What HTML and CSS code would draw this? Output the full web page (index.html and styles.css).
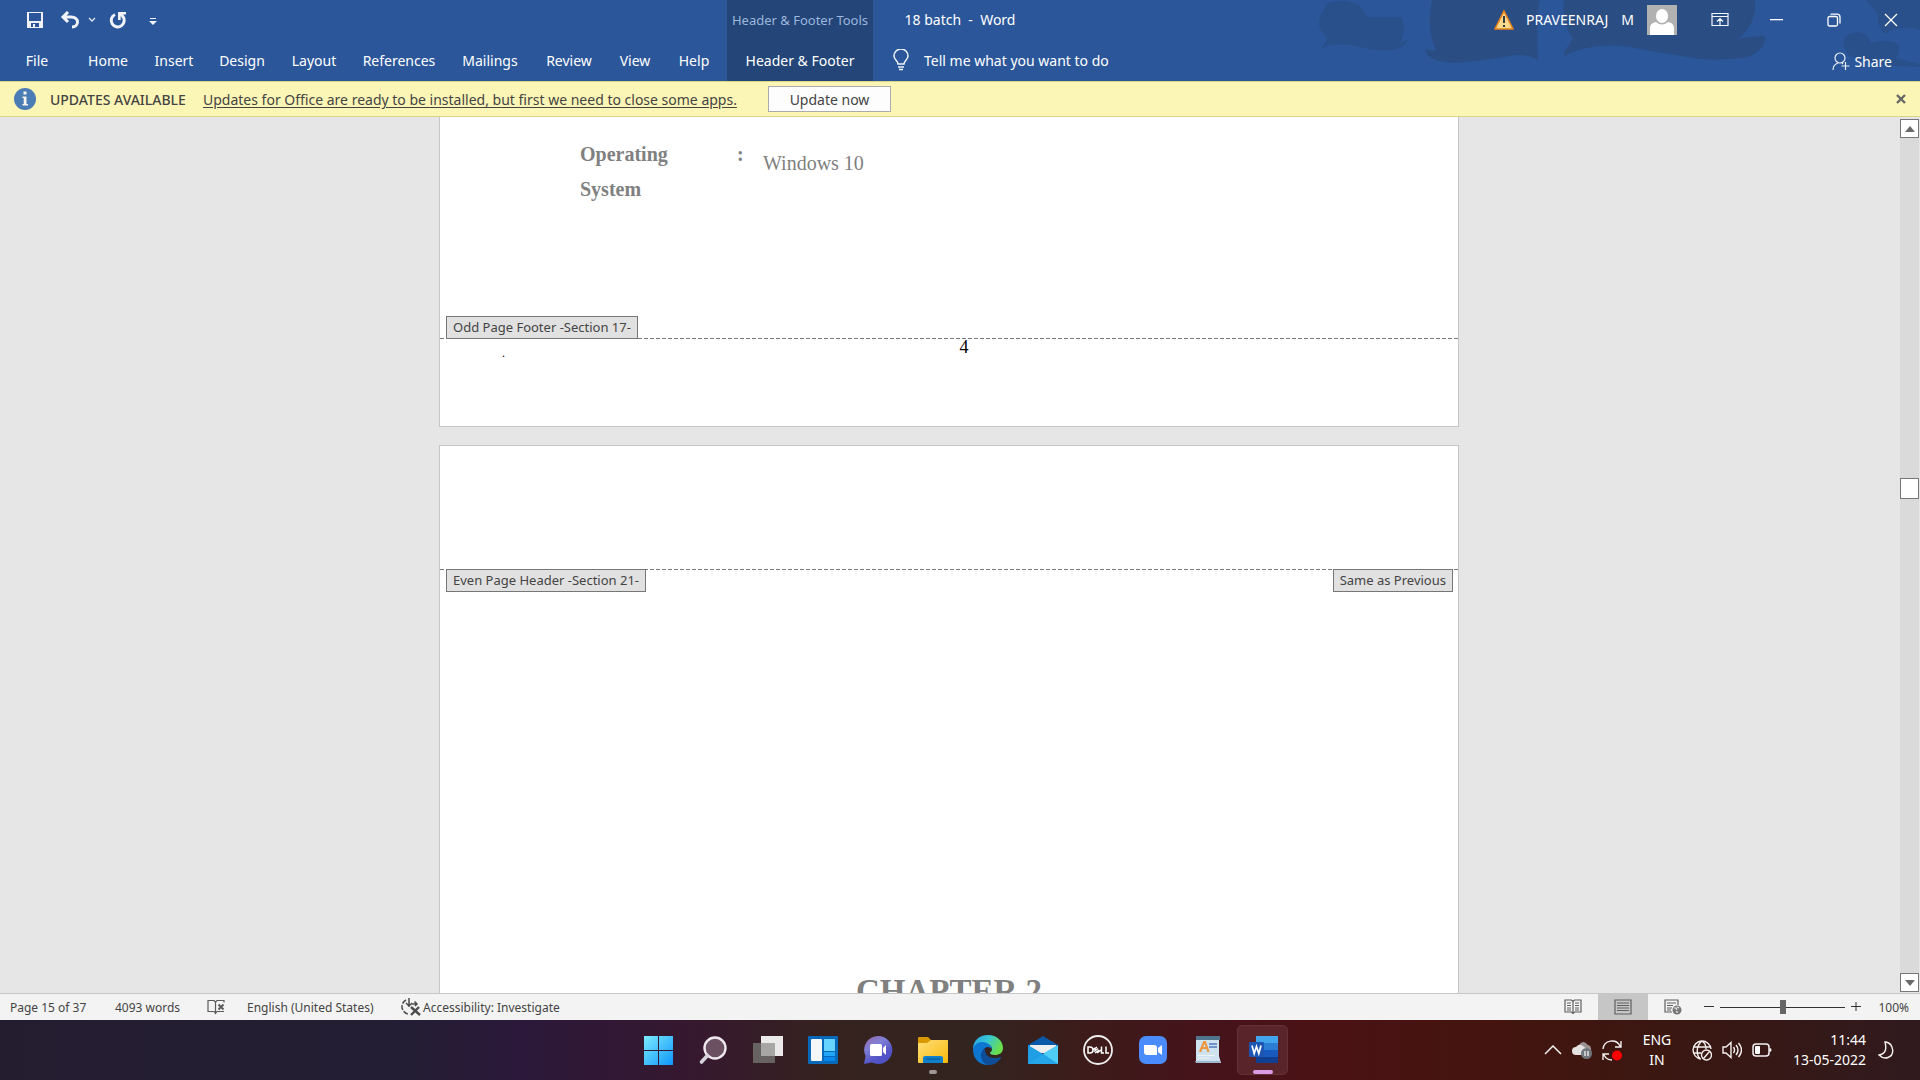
FILE: index.html
```html
<!DOCTYPE html>
<html lang="en">
<head>
<meta charset="utf-8">
<title>18 batch - Word</title>
<meta name="viewport" content="width=device-width, initial-scale=1">
<link rel="stylesheet" href="styles.css">
</head>
<body>
<header class="ribbon">
  <svg class="ribbon-art" width="640" height="81" viewBox="0 0 640 81" aria-hidden="true">
    <path opacity=".7" d="M48 3Q66-2 80 6L88 17L121 17Q128 28 120 43L108 44Q120 43 127 40Q126 46 114 50Q90 51 76 46Q55 42 40 49Q46 43 47 38Q34 26 42 12Z"/>
    <path d="M152 0H260Q256 14 258 60Q246 53 230 56Q200 61 176 63Q146 62 145 49Q151 52 156 50Q146 30 152 0Z"/>
    <path d="M284 0H475Q477 24 458 39Q472 36 485 36Q486 50 468 57Q440 61 420 59Q380 53 350 47Q310 42 284 56Q284 50 293 39Q282 24 284 0Z"/>
    <path opacity=".7" d="M563 44Q565 32 578 32Q590 34 590 43Q608 38 618 44Q622 52 616 58L640 64V67Q590 66 568 55Z"/>
    <path opacity=".7" d="M586 0H640V30Q618 24 606 34Q596 28 598 14Z"/>
  </svg>
  <div class="quick">
    <button class="icon-btn" aria-label="Save"><svg width="18" height="18" viewBox="0 0 18 18"><path d="M1 1h16v16H1z" fill="#f0f4fa"/><path d="M3 2h12v8H3z" fill="#2b579a"/><path d="M5 12h8v4H9v-3H7v3H5z" fill="#2b579a"/></svg></button>
    <button class="icon-btn undo" aria-label="Undo"><svg width="20" height="18" viewBox="0 0 20 18" fill="none" stroke="#f0f4fa" stroke-width="3"><path d="M8 1L3 6l5 5M3 6h8c9 0 8 10 1 10"/></svg></button>
    <button class="icon-btn caret" aria-label="Undo history"><svg width="8" height="6" viewBox="0 0 8 6" fill="none" stroke="#dfe8f5" stroke-width="1.3"><path d="M1 1l3 3 3-3"/></svg></button>
    <button class="icon-btn redo" aria-label="Repeat"><svg width="18" height="18" viewBox="0 0 18 18"><path d="M6 3.500A6.500 6.500 0 1 0 13.500 5" fill="none" stroke="#f0f4fa" stroke-width="3"/><path d="M9 1h8v2.500h-3l1.500 2-2 1.500-1.800-2V9H9z" fill="#f0f4fa"/></svg></button>
    <button class="icon-btn custom" aria-label="Customize toolbar"><svg width="8" height="8" viewBox="0 0 8 8" fill="#f0f4fa"><path d="M1 0h6v1H1zM0 3h8L4 7z"/></svg></button>
  </div>
  <div class="context-title">Header &amp; Footer Tools</div>
  <h1 class="doc-title">18 batch&nbsp; -&nbsp; Word</h1>
  <div class="account">
    <svg class="warn" width="20" height="20" viewBox="0 0 20 20"><path d="M10 1L19 19H1z" fill="#f9d98c" stroke="#e8811a" stroke-width="1.600"/><path d="M10 6v7M10 15v2" stroke="#33383d" stroke-width="2"/></svg>
    <span class="user"><span>PRAVEENRAJ</span> <span>M</span></span>
    <svg class="avatar" width="30" height="30" viewBox="0 0 30 30"><path d="M0 0h30v30H0z" fill="#b1b1b1"/><ellipse cx="15" cy="11" rx="6" ry="7" fill="#fff"/><path d="M3 30V23q0-5 6-6q6 5 12 0q6 1 6 6v7z" fill="#fff"/></svg>
    <button class="win-btn display" aria-label="Ribbon display options"><svg width="18" height="16" viewBox="0 0 18 16" fill="none" stroke="#f4f7fb" stroke-width="1.200"><path d="M1 1.500h16v12H1zM1 4.500h16M9 13V7M6 9.500L9 6.500l3 3"/></svg></button>
    <button class="win-btn" aria-label="Minimize"><svg width="14" height="14" viewBox="0 0 14 14"><path d="M0 6h13v1.300H0z" fill="#fff"/></svg></button>
    <button class="win-btn" aria-label="Restore"><svg width="14" height="14" viewBox="0 0 14 14" fill="none" stroke="#fff" stroke-width="1.300"><rect x="1" y="3.500" width="9.500" height="9.500" rx="1.500"/><path d="M3.500 1.200H10a3 3 0 0 1 3 3V10.500"/></svg></button>
    <button class="win-btn" aria-label="Close"><svg width="14" height="14" viewBox="0 0 14 14" stroke="#fff" stroke-width="1.300"><path d="M1 1l12 12M13 1L1 13"/></svg></button>
  </div>
  <nav class="tabs" aria-label="Ribbon tabs">
    <button>File</button><button>Home</button><button>Insert</button><button>Design</button><button>Layout</button><button>References</button><button>Mailings</button><button>Review</button><button>View</button><button>Help</button>
  </nav>
  <button class="context-tab">Header &amp; Footer</button>
  <div class="tell-row">
    <button class="tell"><svg width="16" height="22" viewBox="0 0 16 22" fill="none" stroke="#f0f4fa" stroke-width="1.500"><path d="M5 15c0-3-4-4-4-8a7 7 0 0 1 14 0c0 4-4 5-4 8zM5 18h6M6 20.500h4"/></svg>Tell me what you want to do</button>
    <button class="share"><svg width="18" height="19" viewBox="0 0 18 19" fill="none" stroke="#e6edf7" stroke-width="1.200"><circle cx="8" cy="6" r="5"/><path d="M1 18c0-4 2-6 5-7M10 11l1 1M13.500 10v8M9.500 14h8"/></svg>Share</button>
  </div>
</header>

<section class="notice">
  <svg class="info" width="22" height="22" viewBox="0 0 22 22"><circle cx="11" cy="11" r="11" fill="#4a7db5"/><path d="M9.500 3.500h3v3h-3zM8.500 8.500h4V16H14v1.500H8.500V16h1.200v-6H8.500z" fill="#f5f5ee"/></svg>
  <strong class="notice-head">UPDATES AVAILABLE</strong>
  <a class="notice-link" href="#update">Updates for Office are ready to be installed, but first we need to close some apps.</a>
  <button class="update">Update now</button>
  <button class="dismiss" aria-label="Dismiss"><svg width="10" height="10" viewBox="0 0 10 10" stroke="#666" stroke-width="2.400"><path d="M1 1l8 8M9 1L1 9"/></svg></button>
</section>

<main class="workspace">
  <div class="canvas">
    <article class="sheet sheet-first">
      <table class="spec">
        <tr><th scope="row">Operating System</th><td class="colon">:</td><td class="value">Windows 10</td></tr>
      </table>
      <footer class="page-footer">
        <div class="marks"><span class="mark">Odd Page Footer -Section 17-</span></div>
        <div class="rule"></div>
        <div class="footer-text"><span class="dot">.</span><span class="number">4</span></div>
      </footer>
    </article>
    <article class="sheet sheet-second">
      <div class="rule"></div>
      <div class="marks marks-header"><span class="mark">Even Page Header -Section 21-</span><span class="mark">Same as Previous</span></div>
      <h2 class="chapter">CHAPTER 2</h2>
    </article>
  </div>
  <div class="scroll">
    <button class="scroll-btn" aria-label="Scroll up"><svg width="10" height="6" viewBox="0 0 10 6"><path d="M0 6l5-6 5 6z" fill="#6a6a6a"/></svg></button>
    <div class="track"><div class="thumb"></div></div>
    <button class="scroll-btn" aria-label="Scroll down"><svg width="10" height="6" viewBox="0 0 10 6"><path d="M0 0l5 6 5-6z" fill="#6a6a6a"/></svg></button>
  </div>
</main>

<footer class="status">
  <div class="status-left">
    <span>Page 15 of 37</span>
    <span>4093 words</span>
    <button aria-label="Proofing errors"><svg width="18" height="16" viewBox="0 0 18 16" fill="none" stroke="#5c5c5c" stroke-width="1.200"><path d="M8.500 3L7 1.500H1v11h6l1.500 2 1.500-2h7M8.500 3v11M8.500 3L10 1.500h7v2"/><path d="M11.500 5.500l5 5M16.500 5.500l-5 5" stroke-width="2"/></svg></button>
    <span>English (United States)</span>
    <button class="access"><svg width="20" height="20" viewBox="0 0 20 20" fill="none" stroke="#4c4c4c" stroke-width="1.500"><path d="M5 3A7.500 7.500 0 0 0 7 17" stroke-dasharray="5 1.500"/><path d="M8 1v9M5 6l3 3 3-3M11 7h5M13.500 4.500L16 7l-2 2"/><path d="M10 10l9 8M18 10l-8 8" stroke-width="2.400"/></svg>Accessibility: Investigate</button>
  </div>
  <div class="status-right">
    <button class="view" aria-label="Read mode"><svg width="18" height="16" viewBox="0 0 18 16" fill="none" stroke="#5f5f5f" stroke-width="1.200"><path d="M9 2.500L7.500 1H1v12h6.500L9 14.500l1.500-1.500H17V1h-6.500zM9 2v13M3 4h4M3 6.500h4M3 9h4M3 11h4M11 4h4M11 6.500h4M11 9h4M11 11h4"/></svg></button>
    <button class="view selected" aria-label="Print layout"><svg width="18" height="16" viewBox="0 0 18 16" fill="none" stroke="#5f5f5f" stroke-width="1.200"><path d="M1 1h16v14H1zM3 4h12M3 6.500h12M3 9h12M3 11.500h12"/></svg></button>
    <button class="view" aria-label="Web layout"><svg width="18" height="16" viewBox="0 0 18 16" fill="none" stroke="#5f5f5f" stroke-width="1.200"><path d="M8 13H1V1h13v5M3 4h9M3 6.500h6M3 9h5M3 11h4"/><circle cx="13" cy="11" r="4.500" fill="#777" stroke="none"/><path d="M10 9l2 0 1 2M13 8l2 1M12 12.500l2 1" stroke="#eee"/></svg></button>
    <button class="zoom-btn" aria-label="Zoom out"><svg width="10" height="10" viewBox="0 0 10 10"><path d="M0 4h10v1H0z" fill="#333"/></svg></button>
    <input class="zoom" type="range" min="0" max="100" value="50" aria-label="Zoom">
    <button class="zoom-btn" aria-label="Zoom in"><svg width="10" height="10" viewBox="0 0 10 10"><path d="M0 4h10v1H0zM4.500 0h1v9h-1z" fill="#333"/></svg></button>
    <span class="percent">100%</span>
  </div>
</footer>

<nav class="taskbar" aria-label="Taskbar">
  <div class="apps">
    <button class="app" aria-label="Start"><svg width="30" height="30" viewBox="0 0 30 30"><defs><linearGradient id="gw" x1="0" y1="0" x2="1" y2="1"><stop offset="0" stop-color="#7cebff"/><stop offset="1" stop-color="#0d96fa"/></linearGradient></defs><path d="M1 1h14v14H1zM16 1h14v14H16zM1 16h14v14H1zM16 16h14v14H16z" fill="url(#gw)"/></svg></button>
    <button class="app" aria-label="Search"><svg width="30" height="30" viewBox="0 0 30 30"><circle cx="17" cy="13" r="10.500" fill="#6b5062" stroke="#eee8ec" stroke-width="2.400"/><path d="M9.500 20.500L3.500 27" stroke="#d5d3da" stroke-width="3.600" stroke-linecap="round"/></svg></button>
    <button class="app" aria-label="Task view"><svg width="30" height="30" viewBox="0 0 30 30"><path d="M8 1h22v20H8z" fill="#ece9ea"/><path d="M0 8h22v20H0z" fill="#676363"/><path d="M8 8h14v13H8z" fill="#a8a5a5"/></svg></button>
    <button class="app" aria-label="Widgets"><svg width="30" height="30" viewBox="0 0 30 30"><rect y="1" width="30" height="28" rx="1" fill="#0868b9"/><rect x="3" y="4" width="11" height="22" rx="1" fill="#f4f6f8"/><path d="M16 4h11v12H16z" fill="#66d4ff"/><path d="M16 17h11v4H16z" fill="#22a7f7"/><path d="M16 22h11v4H16z" fill="#0788ed"/></svg></button>
    <button class="app" aria-label="Chat"><svg width="30" height="30" viewBox="0 0 30 30"><defs><linearGradient id="gc" x1="0" y1="0" x2=".6" y2="1"><stop offset="0" stop-color="#9a66a8"/><stop offset=".4" stop-color="#7f7fd6"/><stop offset=".75" stop-color="#5757c9"/><stop offset="1" stop-color="#4c51c3"/></linearGradient></defs><path d="M15 1a14 14 0 1 1-6 26.500L1 29l1.500-8A14 14 0 0 1 15 1z" fill="url(#gc)"/><rect x="7" y="9" width="12" height="12" rx="1.500" fill="#fff"/><path d="M20 13l3-3v10l-3-3z" fill="#fff"/></svg></button>
    <button class="app open" aria-label="File Explorer"><svg width="30" height="30" viewBox="0 0 30 30"><defs><linearGradient id="gf" x1="0" y1="0" x2="1" y2="1"><stop offset="0" stop-color="#ffdf78"/><stop offset="1" stop-color="#f9b90c"/></linearGradient></defs><path d="M0 3q0-1 1-1h9l3 3h3v5H0z" fill="#d99904"/><path d="M0 8h9l4-3h17v22q0 1-1 1H1q-1 0-1-1z" fill="url(#gf)"/><path d="M5 28v-5q0-2 2-2h16q2 0 2 2v5z" fill="#1080ca"/><path d="M8 24h14" stroke="#0a5b98" stroke-width="1.200"/></svg></button>
    <button class="app" aria-label="Edge"><svg width="30" height="30" viewBox="0 0 30 30"><defs><linearGradient id="ge" x1="0" y1="0" x2="1" y2=".4"><stop offset="0" stop-color="#249fe0"/><stop offset=".5" stop-color="#36c7d5"/><stop offset="1" stop-color="#69dd4b"/></linearGradient></defs><path d="M0 14C0 6 6 0 15 0s15 6 15 13c0 5-4 7-8 7-3 0-5-1-5-2 0-1 2-1 2-4s-3-5-6-5C7 9 1 12 0 14z" fill="url(#ge)"/><path d="M0 15c0-5 5-8 9-8 6 0 10 4 10 7-1-1-3-2-4-2-4 0-6 4-6 8 0 5 4 9 8 10H15C7 30 0 24 0 15z" fill="#0d76d1"/><path d="M12 13c-3 2-4 5-4 8 0 5 4 9 9 9s9-4 11-7c0-1 0-1-1-1-2 1-4 1-6 1-6 0-10-5-9-10z" fill="#0e4e98"/></svg></button>
    <button class="app" aria-label="Mail"><svg width="30" height="30" viewBox="0 0 30 30"><path d="M0 10L15 1l15 9v4H0z" fill="#0a59a8"/><path d="M2 10h26v8H2z" fill="#eee"/><path d="M0 10l15 9 15-9v19H0z" fill="#1f9ee6"/><path d="M30 10v19L15 19z" fill="#50cdf6"/><path d="M0 29l15-10 15 10z" fill="#25a6e9"/></svg></button>
    <button class="app" aria-label="Dell"><svg width="30" height="30" viewBox="0 0 30 30"><circle cx="15" cy="15" r="14" fill="none" stroke="#eee" stroke-width="1.800"/><g fill="none" stroke="#fff" stroke-width="1.500"><path d="M5 12v6h2c4 0 4-6 0-6zM10 15l4-3M11 16.500l4-3M12 18l4-3M13 15l-2-2M14 18l4-3M18.500 11.500V18H21M23 11.500V18h3"/></g></svg></button>
    <button class="app" aria-label="Zoom meetings"><svg width="30" height="30" viewBox="0 0 30 30"><rect x="1" y="1" width="28" height="28" rx="7" fill="#4a8cfb"/><path d="M6 10h10q3 0 3 3v7H9q-3 0-3-3zM20 13l4-3v10l-4-3z" fill="#fff"/></svg></button>
    <button class="app" aria-label="WordPad"><svg width="30" height="30" viewBox="0 0 30 30"><path d="M3 1h23v20l2 7H3z" fill="#cfe2ef"/><path d="M3 1h24v4H3z" fill="#4f748e"/><path d="M2 26h25v2H3z" fill="#9db7cd"/><path d="M7 17l4-10h1l3.500 10M8.500 13h5" fill="none" stroke="#ec963f" stroke-width="2.200"/><path d="M16 9h8M16 12h8" stroke="#4c78bd" stroke-width="1.500"/><path d="M5 20.500h17M5 23h12" stroke="#eef6fb" stroke-width="1.200"/></svg></button>
    <button class="app active" aria-label="Word"><svg width="30" height="30" viewBox="0 0 30 30"><path d="M8 1h22v7H8z" fill="#41a5ee"/><path d="M8 8h22v7H8z" fill="#2b7cd3"/><path d="M8 15h22v7H8z" fill="#185abd"/><path d="M8 22h22v6H8z" fill="#103f91"/><rect x="1" y="7" width="15" height="15" rx="1" fill="#1d55b3"/><path d="M4 10.500l2.200 8 2.300-7 2.300 7 2.200-8" fill="none" stroke="#fff" stroke-width="1.700"/></svg></button>
  </div>
  <div class="tray">
    <button class="tray-btn" aria-label="Show hidden icons"><svg width="18" height="10" viewBox="0 0 18 10" fill="none" stroke="#f4f0f0" stroke-width="1.500"><path d="M1 9l8-8 8 8"/></svg></button>
    <button class="tray-btn" aria-label="OneDrive"><svg width="20" height="18" viewBox="0 0 20 18"><path d="M7 4q4-6 9 0 4 1 3 7H9z" fill="#9a9291"/><path d="M4 14a4 4 0 0 1 0-8q3-4 7-1l5 4v5z" fill="#e6e2e2"/><circle cx="14.500" cy="12.500" r="5.500" fill="#70777c"/><path d="M13 10v5M16 10v5" stroke="#fff" stroke-width="1.200"/></svg></button>
    <button class="tray-btn" aria-label="Update status"><svg width="20" height="21" viewBox="0 0 20 21" fill="none" stroke="#f4f0f0" stroke-width="1.400"><path d="M1 9A9 9 0 0 1 18 6M19 1v6h-6M1 20v-6h6M2 15a9 9 0 0 0 8 5"/><circle cx="15" cy="15.500" r="5" fill="#f00" stroke="none"/></svg></button>
    <button class="ime">ENG<br>IN</button>
    <button class="tray-btn" aria-label="Network"><svg width="20" height="21" viewBox="0 0 20 21" fill="none" stroke="#f4f0f0" stroke-width="1.400"><path d="M9 19A9 9 0 1 1 19 9M1 7h17M1 13h8M10 1C4 6 4 14 8 19M10 1c3 2 4 5 4 8"/><circle cx="14.500" cy="15" r="5"/><path d="M11.500 18.500l6-7"/></svg></button>
    <button class="tray-btn" aria-label="Volume"><svg width="20" height="18" viewBox="0 0 20 18" fill="none" stroke="#f4f0f0" stroke-width="1.400"><path d="M1 6h3l5-4.500v15L4 12H1zM11.500 6q2 3 0 6M14 4q4 5 0 10M16.500 2q6 7 0 14"/></svg></button>
    <button class="tray-btn" aria-label="Battery"><svg width="20" height="14" viewBox="0 0 20 14"><rect x="1" y="1" width="16" height="12" rx="3" fill="none" stroke="#f4f0f0" stroke-width="1.500"/><rect x="3" y="3" width="5" height="8" rx="1" fill="#fff"/><path d="M17.500 5q2 0 2 2t-2 2z" fill="#fff"/></svg></button>
    <button class="clock"><time datetime="2022-05-13T11:44">11:44<br>13-05-2022</time></button>
    <button class="tray-btn" aria-label="Focus assist"><svg width="16" height="18" viewBox="0 0 16 18" fill="none" stroke="#f4f0f0" stroke-width="1.400"><path d="M8 1c8 2 9 13 2 15.500-4 1.500-7-.5-9-2.500C7 13 9 9 7 1z"/></svg></button>
  </div>
</nav>
</body>
</html>
```

FILE: styles.css
```css
* { box-sizing: border-box; }

body {
  margin: 0;
  height: 100vh;
  display: flex;
  flex-direction: column;
  overflow: hidden;
  font-family: "Noto Sans", "Open Sans", sans-serif;
  font-size: 14px;
  color: #444;
}

button {
  margin: 0;
  padding: 0;
  border: 0;
  background: none;
  color: inherit;
  font: inherit;
  white-space: nowrap;
}

svg { display: block; flex: none; }

/* Title bar and ribbon tabs */
.ribbon {
  position: relative;
  flex: none;
  display: grid;
  grid-template-columns: 727px 146px 1fr;
  grid-template-rows: 39px 42px;
  background: #2b579a;
  color: #fff;
}

.ribbon-art {
  position: absolute;
  top: 0;
  right: 0;
  fill: #2a4d84;
}

.quick {
  grid-area: 1 / 1;
  display: flex;
  align-items: center;
  padding-left: 26px;
}

.undo { margin-left: 16px; }
.caret { margin-left: 8px; }
.redo { margin-left: 13px; }
.custom { margin: 4px 0 0 22px; }

.context-title,
.context-tab {
  display: flex;
  align-items: center;
  justify-content: center;
  background: #234578;
}

.context-title {
  grid-area: 1 / 2;
  font-size: 13px;
  color: #9db6dc;
}

.context-tab { grid-area: 2 / 2; }

.doc-title {
  grid-area: 1 / 1 / 2 / -1;
  place-self: center;
  margin: 0;
  font-size: 14px;
  font-weight: 400;
}

.account {
  position: relative;
  grid-area: 1 / 3;
  display: flex;
  align-items: center;
  justify-content: flex-end;
  padding-right: 1px;
}

.user {
  display: flex;
  justify-content: space-between;
  width: 108px;
  margin: 0 13px 0 12px;
}

.win-btn {
  width: 57px;
  height: 38px;
  display: flex;
  align-items: center;
  justify-content: center;
}

.display { margin-left: 14px; }

.tabs {
  grid-area: 2 / 1;
  display: grid;
  grid-template-columns: 74px 68px 64px 72px 72px 98px 84px 74px 58px 60px;
}

.tell-row {
  position: relative;
  grid-area: 2 / 3;
  display: flex;
  align-items: center;
  justify-content: space-between;
  padding: 0 28px 0 20px;
}

.tell { display: flex; align-items: center; gap: 15px; }
.share { display: flex; align-items: center; gap: 4px; padding-top: 3px; }

/* Update notice */
.notice {
  flex: none;
  display: grid;
  grid-template-columns: 36px 153px 565px 123px 1fr;
  align-items: center;
  height: 36px;
  padding: 0 14px;
  border-top: 1px solid #d9d583;
  border-bottom: 1px solid #d9d583;
  background: #fcf6b6;
}

.notice-head { font-weight: 500; }
.notice-link { color: #444; text-underline-offset: 2px; }

.update {
  height: 26px;
  border: 1px solid #ababab;
  background: #fdfdfd;
}

.dismiss { justify-self: end; }

/* Document area */
.workspace {
  flex: 1;
  min-height: 0;
  display: flex;
  background: #e6e6e6;
}

.canvas {
  flex: 1;
  display: flex;
  flex-direction: column;
  align-items: center;
  gap: 18px;
  padding-right: 2px;
  overflow: hidden;
}

.sheet {
  flex: none;
  display: flex;
  flex-direction: column;
  width: 1020px;
  border: 1px solid #c6c6c6;
  background: #fff;
  font-family: "Liberation Serif", serif;
  color: #808080;
}

.sheet-first { border-top: 0; padding-top: 20px; }
.sheet-second { min-height: 1320px; padding-top: 123px; }

.spec {
  width: 400px;
  margin-left: 140px;
  border-collapse: collapse;
  font-size: 20px;
  line-height: 35px;
}

.spec th { width: 157px; padding: 0 60px 0 0; text-align: left; }
.spec td { padding: 0; vertical-align: top; }
.spec .colon { width: 26px; font-weight: 700; }
.spec .value { padding-top: 9px; }

.page-footer { margin-top: 109px; }

.marks {
  display: flex;
  justify-content: space-between;
  padding: 0 5px 0 6px;
}

.mark {
  height: 23px;
  padding: 0 6px;
  border: 1px solid #777;
  background: #e1e1e1;
  font: 13px/21px "Noto Sans", "Open Sans", sans-serif;
  color: #444;
}

.page-footer .marks { margin-bottom: -1px; }
.marks-header { margin-top: -1px; }

.rule {
  height: 1px;
  background: repeating-linear-gradient(90deg, #7a7a7a 0 4px, transparent 4px 6px);
}

.footer-text {
  display: grid;
  grid-template-columns: 1fr auto 1fr;
  height: 87px;
  padding-left: 30px;
  font-size: 18px;
  line-height: 16px;
  color: #000;
}

.dot { padding-left: 32px; font-size: 12px; line-height: 28px; }

.chapter {
  margin: 372px 0 0;
  font-size: 33px;
  line-height: 54px;
  text-align: center;
}

/* Vertical scroll bar */
.scroll {
  flex: none;
  display: flex;
  flex-direction: column;
  width: 20px;
  padding: 2px 1px 1px 0;
}

.scroll-btn {
  display: flex;
  align-items: center;
  justify-content: center;
  height: 19px;
  border: 1px solid #777;
  background: #fff;
}

.track { flex: 1; padding-top: 340px; background: #dadada; }
.thumb { height: 21px; border: 1px solid #777; background: #fff; }

/* Status bar */
.status {
  flex: none;
  display: flex;
  justify-content: space-between;
  height: 27px;
  border-top: 1px solid #c6c6c6;
  background: #f3f3f3;
  font-size: 12px;
}

.status-left {
  display: grid;
  grid-template-columns: 105px 92px 40px 154px auto;
  align-items: center;
  padding-left: 10px;
}

.access { display: flex; align-items: center; gap: 2px; }

.status-right { display: flex; align-items: center; padding-right: 11px; }

.view {
  width: 50px;
  height: 26px;
  display: flex;
  align-items: center;
  justify-content: center;
}

.selected { background: #c6c6c6; }
.zoom-btn { margin: 0 6px; }

.zoom {
  appearance: none;
  width: 125px;
  height: 16px;
  margin: 0;
  background: linear-gradient(#333, #333) center / 100% 1px no-repeat;
}

.zoom::-webkit-slider-thumb {
  appearance: none;
  width: 6px;
  height: 14px;
  background: #666;
}

.percent { margin-left: 11px; }

/* Taskbar */
.taskbar {
  flex: none;
  display: grid;
  grid-template-columns: 1fr auto 1fr;
  align-items: center;
  height: 60px;
  background: linear-gradient(90deg, #241d30 0, #231e33 21%, #2b183a 27%, #36182f 36%, #35221f 43%, #33241f 51%, #3d1b1a 57%, #46131b 63%, #4b1214 69%, #43150f 79%, #391712 88%, #301a1e 100%);
  color: #fff;
}

.apps { grid-column: 2; display: flex; }

.app {
  position: relative;
  display: flex;
  align-items: center;
  justify-content: center;
  width: 51px;
  height: 50px;
  margin: 0 2px;
}

.active {
  border: 1px solid #653136;
  border-radius: 5px;
  background: #5a242b;
}

.open::after,
.active::after {
  content: "";
  position: absolute;
  bottom: 1px;
  left: 50%;
  width: 8px;
  height: 4px;
  margin-left: -4px;
  border-radius: 2px;
  background: #a09896;
}

.active::after {
  bottom: 0;
  width: 20px;
  margin-left: -10px;
  background: #dd9be6;
}

.tray {
  grid-column: 3;
  display: flex;
  align-items: center;
  justify-content: flex-end;
  gap: 10px;
  padding-right: 26px;
  line-height: 20px;
}

.ime { width: 50px; text-align: center; }
.clock { min-width: 76px; margin: 0 2px 0 8px; text-align: right; }
```
